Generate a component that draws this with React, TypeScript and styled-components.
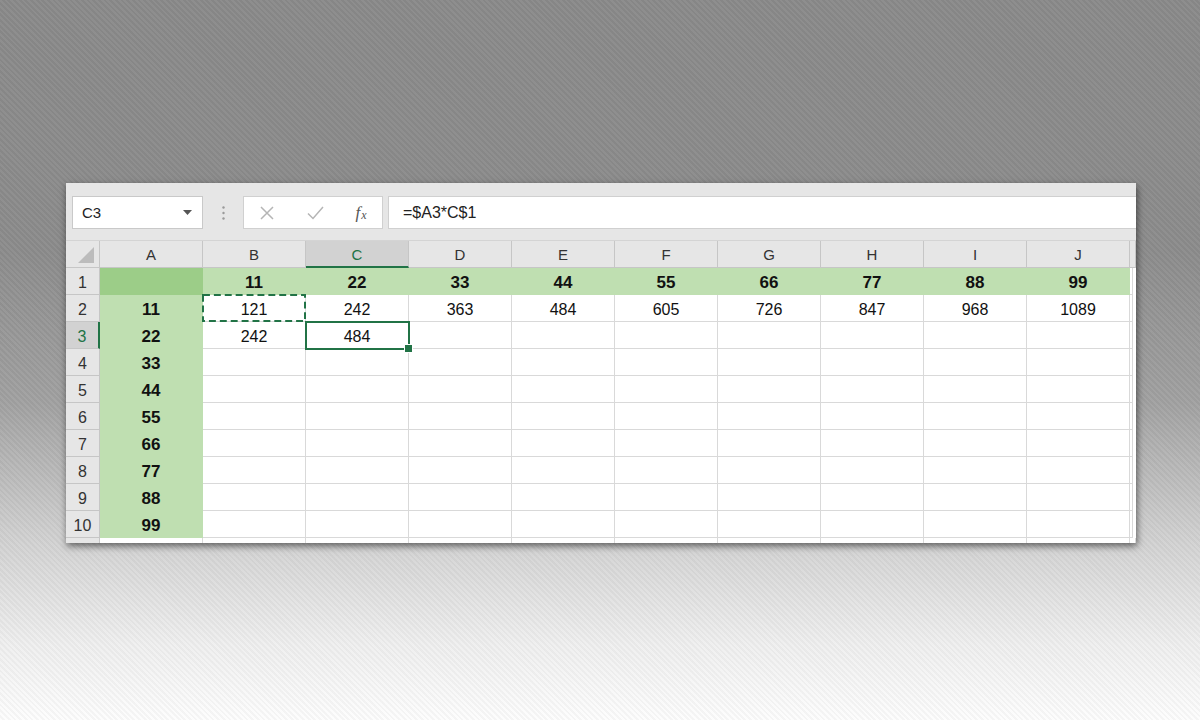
import styled, { createGlobalStyle } from 'styled-components';

const GREEN = '#217346';
const FILL = '#bfdfb1';
const FILL_DARK = '#9ccd88';
const GRID = '#d9d9d9';

const GlobalStyle = createGlobalStyle`
  html, body { margin: 0; padding: 0; }
  body {
    width: 1200px;
    height: 720px;
    overflow: hidden;
    font-family: "Liberation Sans", Arial, sans-serif;
  }
`;

const Page = styled.div`
  width: 1200px;
  height: 720px;
  box-sizing: border-box;
  padding: 183px 0 0 66px;
  background:
    repeating-linear-gradient(45deg, rgba(255,255,255,0.035) 0 2px, rgba(0,0,0,0.03) 2px 4px),
    linear-gradient(to bottom, #8a8a8a 0%, #8c8c8c 35%, #a2a2a2 56%, #d4d4d4 76%, #f0f0f0 90%, #fdfdfd 100%);
`;

const Window = styled.div`
  width: 1070px;
  height: 360px;
  background: #fff;
  box-shadow: 1px 3px 7px rgba(0, 0, 0, 0.55);
  display: flex;
  flex-direction: column;
`;

/* ---------- formula bar ---------- */

const FormulaBar = styled.div`
  height: 58px;
  box-sizing: border-box;
  background: #e6e6e6;
  display: flex;
  align-items: flex-start;
  padding: 13px 0 0 6px;
  border-bottom: 1px solid #d4d4d4;
`;

const NameBox = styled.div`
  width: 131px;
  height: 33px;
  box-sizing: border-box;
  background: #fff;
  border: 1px solid #c9c9c9;
  display: flex;
  align-items: center;
  justify-content: space-between;
  padding: 0 10px 0 9px;
  font-size: 15px;
  color: #222;
`;

const Grip = styled.div`
  width: 40px;
  height: 33px;
  display: flex;
  align-items: center;
  justify-content: center;
`;

const ButtonBox = styled.div`
  width: 140px;
  height: 33px;
  box-sizing: border-box;
  background: #fff;
  border: 1px solid #d0d0d0;
  display: flex;
  align-items: center;
  padding: 0 0 0 14px;
`;

const IconSlot = styled.div<{ $w: number }>`
  width: ${p => p.$w}px;
  display: flex;
  align-items: center;
  justify-content: center;
`;

const Fx = styled.span`
  font-family: "Liberation Serif", "Times New Roman", serif;
  font-style: italic;
  font-size: 17px;
  color: #555;
  sub {
    font-size: 12px;
    vertical-align: -1px;
    margin-left: 1px;
  }
`;

const FormulaInput = styled.div`
  flex: 1;
  height: 33px;
  margin-left: 5px;
  box-sizing: border-box;
  background: #fff;
  border: 1px solid #d0d0d0;
  border-right: none;
  display: flex;
  align-items: center;
  padding-left: 14px;
  font-size: 16px;
  color: #222;
`;

/* ---------- grid ---------- */

const Sheet = styled.div`
  display: grid;
  grid-template-columns: 34px repeat(10, 103px) 1fr;
  grid-auto-rows: 27px;
  background: #fff;
`;

const Corner = styled.div`
  background: #e6e6e6;
  border-right: 1px solid #c6c6c6;
  border-bottom: 1px solid #c6c6c6;
  display: flex;
  align-items: flex-end;
  justify-content: flex-end;
  padding: 0 5px 4px 0;
`;

const ColHead = styled.div<{ $active?: boolean }>`
  background: ${p => (p.$active ? '#d2d2d2' : '#e6e6e6')};
  border-right: 1px solid #c6c6c6;
  border-bottom: ${p => (p.$active ? `2px solid ${GREEN}` : '1px solid #c6c6c6')};
  box-sizing: border-box;
  display: flex;
  align-items: center;
  justify-content: center;
  padding-top: 1px;
  font-size: 15px;
  color: ${p => (p.$active ? GREEN : '#333')};
`;

const RowHead = styled.div<{ $active?: boolean }>`
  background: ${p => (p.$active ? '#d2d2d2' : '#e6e6e6')};
  border-right: ${p => (p.$active ? `2px solid ${GREEN}` : '1px solid #c6c6c6')};
  border-bottom: 1px solid #c6c6c6;
  box-sizing: border-box;
  display: flex;
  align-items: center;
  justify-content: center;
  padding-top: 3px;
  font-size: 16px;
  color: ${p => (p.$active ? GREEN : '#333')};
`;

type Fill = 'none' | 'green' | 'dark';

const Cell = styled.div<{ $fill: Fill; $bold?: boolean }>`
  position: relative;
  box-sizing: border-box;
  background: ${p => (p.$fill === 'dark' ? FILL_DARK : p.$fill === 'green' ? FILL : '#fff')};
  border-right: 1px solid ${p => (p.$fill === 'none' ? GRID : 'transparent')};
  border-bottom: 1px solid ${p => (p.$fill === 'none' ? GRID : 'transparent')};
  display: flex;
  align-items: center;
  justify-content: center;
  padding-top: 3px;
  font-size: ${p => (p.$bold ? 17 : 16)}px;
  font-weight: ${p => (p.$bold ? 700 : 400)};
  color: #111;
`;

const Edge = styled.div`
  border-right: 1px solid ${GRID};
  border-bottom: 1px solid ${GRID};
  width: 2px;
  box-sizing: content-box;
`;

const ActiveFrame = styled.div`
  position: absolute;
  z-index: 2;
  left: -1px;
  top: -1px;
  right: -2px;
  bottom: -2px;
  border: 2px solid ${GREEN};
  pointer-events: none;
`;

const Handle = styled.div`
  position: absolute;
  right: -5px;
  bottom: -5px;
  width: 7px;
  height: 7px;
  background: ${GREEN};
  border: 1px solid #fff;
`;

const Ants = styled.svg`
  position: absolute;
  z-index: 2;
  left: -1px;
  top: -1px;
  width: calc(100% + 2px);
  height: calc(100% + 2px);
  overflow: visible;
  pointer-events: none;
`;

const BottomStrip = styled.div`
  flex: 1;
  display: grid;
  grid-template-columns: 34px repeat(10, 103px) 1fr;
`;

const StripCell = styled.div<{ $head?: boolean }>`
  background: ${p => (p.$head ? '#e6e6e6' : '#fff')};
  border-right: 1px solid ${p => (p.$head ? '#c6c6c6' : GRID)};
`;

const cols = ['A', 'B', 'C', 'D', 'E', 'F', 'G', 'H', 'I', 'J'];
const factors = [11, 22, 33, 44, 55, 66, 77, 88, 99];

const valueAt = (row: number, col: number): { text: string; fill: Fill; bold: boolean } => {
  // row, col are 1-based (col 1 = A)
  if (row === 1 && col === 1) return { text: '', fill: 'dark', bold: false };
  if (row === 1) return { text: String(factors[col - 2]), fill: 'green', bold: true };
  if (col === 1) return { text: String(factors[row - 2]), fill: 'green', bold: true };
  if (row === 2) return { text: String(11 * factors[col - 2]), fill: 'none', bold: false };
  if (row === 3 && col <= 3) return { text: String(22 * factors[col - 2]), fill: 'none', bold: false };
  return { text: '', fill: 'none', bold: false };
};

export default function App() {
  const rows = Array.from({ length: 10 }, (_, i) => i + 1);
  return (
    <Page>
      <GlobalStyle />
      <Window>
        <FormulaBar>
          <NameBox>
            <span>C3</span>
            <svg width="9" height="5" viewBox="0 0 9 5">
              <path d="M0 0h9L4.5 5z" fill="#555" />
            </svg>
          </NameBox>
          <Grip>
            <svg width="3" height="14" viewBox="0 0 3 14">
              <circle cx="1.5" cy="1.5" r="1.2" fill="#9a9a9a" />
              <circle cx="1.5" cy="7" r="1.2" fill="#9a9a9a" />
              <circle cx="1.5" cy="12.5" r="1.2" fill="#9a9a9a" />
            </svg>
          </Grip>
          <ButtonBox>
            <IconSlot $w={18}>
              <svg width="14" height="14" viewBox="0 0 14 14">
                <path d="M1 1l12 12M13 1L1 13" stroke="#b5b5b5" strokeWidth="1.5" fill="none" />
              </svg>
            </IconSlot>
            <IconSlot $w={78}>
              <svg width="17" height="14" viewBox="0 0 17 14">
                <path d="M1 7.5l5 5L16 1" stroke="#b5b5b5" strokeWidth="1.5" fill="none" />
              </svg>
            </IconSlot>
            <IconSlot $w={14}>
              <Fx>
                f<sub>x</sub>
              </Fx>
            </IconSlot>
          </ButtonBox>
          <FormulaInput>=$A3*C$1</FormulaInput>
        </FormulaBar>

        <Sheet>
          <Corner>
            <svg width="16" height="16" viewBox="0 0 16 16">
              <path d="M16 0V16H0z" fill="#bcbcbc" />
            </svg>
          </Corner>
          {cols.map(c => (
            <ColHead key={c} $active={c === 'C'}>
              {c}
            </ColHead>
          ))}
          <ColHead />

          {rows.map(r => (
            <RowFragment key={r} row={r} />
          ))}
        </Sheet>
        <BottomStrip>
          <StripCell $head />
          {cols.map(c => (
            <StripCell key={c} />
          ))}
          <StripCell />
        </BottomStrip>
      </Window>
    </Page>
  );
}

function RowFragment({ row }: { row: number }) {
  return (
    <>
      <RowHead $active={row === 3}>{row}</RowHead>
      {cols.map((_, i) => {
        const col = i + 1;
        const v = valueAt(row, col);
        return (
          <Cell key={col} $fill={v.fill} $bold={v.bold}>
            {v.text}
            {row === 3 && col === 3 && (
              <ActiveFrame>
                <Handle />
              </ActiveFrame>
            )}
            {row === 2 && col === 2 && (
              <Ants viewBox="0 0 105 29" preserveAspectRatio="none">
                <rect
                  x="1"
                  y="1"
                  width="103"
                  height="27"
                  fill="none"
                  stroke={GREEN}
                  strokeWidth="2"
                  strokeDasharray="7 4"
                />
              </Ants>
            )}
          </Cell>
        );
      })}
      <Edge />
    </>
  );
}
